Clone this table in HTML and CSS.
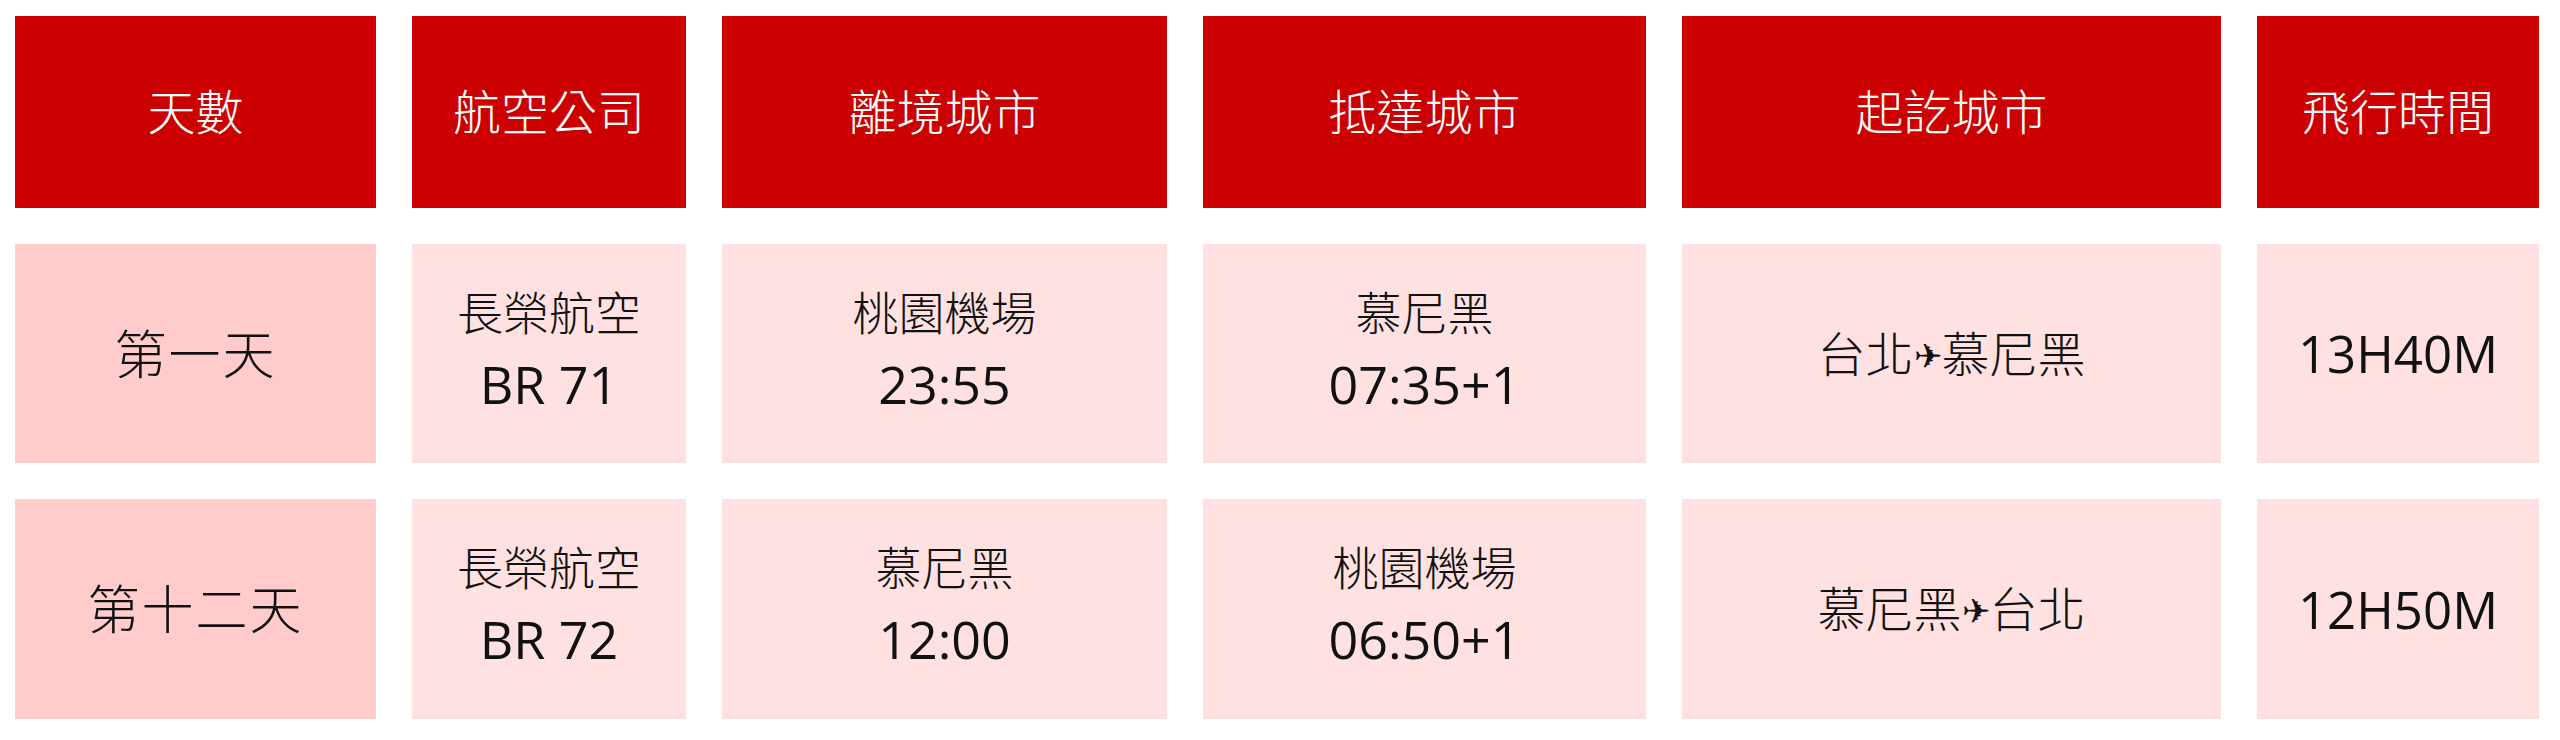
FILE: index.html
```html
<!DOCTYPE html>
<html lang="zh-Hant">
<head>
<meta charset="utf-8">
<title>航班資訊</title>
<link rel="stylesheet" href="styles.css">
</head>
<body>
<div class="flights">
  <div class="cell head">天數</div>
  <div class="cell head">航空公司</div>
  <div class="cell head">離境城市</div>
  <div class="cell head">抵達城市</div>
  <div class="cell head">起訖城市</div>
  <div class="cell head">飛行時間</div>

  <div class="cell day">第一天</div>
  <div class="cell body two"><span class="zh">長榮航空</span><span class="en">BR 71</span></div>
  <div class="cell body two"><span class="zh">桃園機場</span><span class="en">23:55</span></div>
  <div class="cell body two"><span class="zh">慕尼黑</span><span class="en">07:35+1</span></div>
  <div class="cell body"><span class="route">台北<span class="plane">✈</span>慕尼黑</span></div>
  <div class="cell body"><span class="big">13H40M</span></div>

  <div class="cell day">第十二天</div>
  <div class="cell body two"><span class="zh">長榮航空</span><span class="en">BR 72</span></div>
  <div class="cell body two"><span class="zh">慕尼黑</span><span class="en">12:00</span></div>
  <div class="cell body two"><span class="zh">桃園機場</span><span class="en">06:50+1</span></div>
  <div class="cell body"><span class="route">慕尼黑<span class="plane">✈</span>台北</span></div>
  <div class="cell body"><span class="big">12H50M</span></div>
</div>
</body>
</html>
```

FILE: styles.css
```css
html, body {
  margin: 0;
  padding: 0;
  background: #ffffff;
}

body {
  font-family: "Open Sans", "Noto Sans CJK TC", sans-serif;
  color: #111111;
}

.flights {
  display: grid;
  grid-template-columns: 361px 274px 445px 443px 539px 282px;
  grid-template-rows: 192px 219px 220px;
  gap: 36px 36px;
  padding: 16px 0 0 15px;
}

.cell {
  display: flex;
  flex-direction: column;
  align-items: center;
  justify-content: center;
  text-align: center;
  line-height: 1.5;
  font-weight: 300;
}

.head {
  background: #cc0000;
  color: #ffffff;
  font-size: 48px;
}

.day {
  background: #ffcbcb;
  font-size: 52px;
  letter-spacing: 2px;
}

.body {
  background: #ffe1e1;
}

.body.two {
  padding-bottom: 8px;
}

.body span {
  display: block;
}

.body .zh {
  font-size: 46px;
  line-height: 67px;
  font-weight: 300;
}

.body .en {
  font-size: 52px;
  line-height: 75px;
  font-weight: 400;
}

.body .route {
  font-size: 48px;
  font-weight: 300;
}

.body .big {
  font-size: 51px;
  font-weight: 400;
}

.body .route .plane {
  display: inline-block;
  font-family: "DejaVu Sans", sans-serif;
  font-size: 34px;
  vertical-align: 4px;
  color: #111111;
}
```
